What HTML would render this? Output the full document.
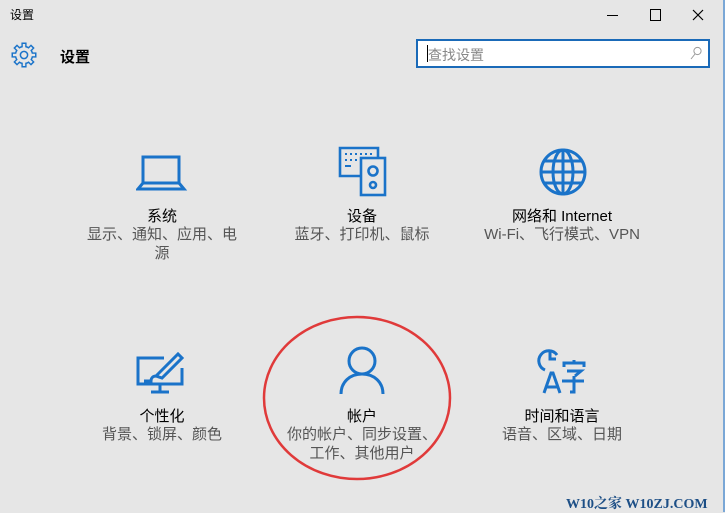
<html><head><style>
body{margin:0;width:725px;height:512px;background:#e6e6e6;font-family:"Liberation Sans","Noto Sans CJK SC",sans-serif;position:relative;overflow:hidden}
.a{position:absolute}
.t{position:absolute;width:200px;text-align:center;font-size:15px;color:#000}
.s{position:absolute;width:170px;text-align:center;font-size:15px;color:#555;line-height:19px}
</style></head><body>
<div class="a" style="left:10px;top:6px;font-size:12px">设置</div>
<div class="a" style="left:607px;top:15px;width:11px;height:1px;background:#000"></div>
<div class="a" style="left:650px;top:9px;width:9px;height:10px;border:1px solid #000"></div>
<svg class="a" style="left:692px;top:9px" width="12" height="12"><path d="M1 1l10 10M11 1L1 11" stroke="#000" stroke-width="1.2"/></svg>
<div class="a" style="left:723px;top:0;width:2px;height:512px;background:#7aa7d6"></div>
<svg class="a" style="left:10px;top:41px" width="28" height="28" viewBox="0 0 28 28">
<g fill="#1a73c9" transform="translate(14 14)">
<circle r="9.3"/>
<g id="tt"><rect x="-2.6" y="-12.5" width="5.2" height="5"/></g>
<use href="#tt" transform="rotate(45)"/><use href="#tt" transform="rotate(90)"/><use href="#tt" transform="rotate(135)"/><use href="#tt" transform="rotate(180)"/><use href="#tt" transform="rotate(225)"/><use href="#tt" transform="rotate(270)"/><use href="#tt" transform="rotate(315)"/>
</g>
<g fill="#e6e6e6" transform="translate(14 14)">
<circle r="7.8"/>
<g id="tb"><rect x="-1.2" y="-11" width="2.4" height="4"/></g>
<use href="#tb" transform="rotate(45)"/><use href="#tb" transform="rotate(90)"/><use href="#tb" transform="rotate(135)"/><use href="#tb" transform="rotate(180)"/><use href="#tb" transform="rotate(225)"/><use href="#tb" transform="rotate(270)"/><use href="#tb" transform="rotate(315)"/>
<circle r="3.6" fill="none" stroke="#1a73c9" stroke-width="1.5"/>
</g></svg>
<div class="a" style="left:60px;top:46px;font-size:15px;font-weight:bold">设置</div>
<div class="a" style="left:416px;top:39px;width:294px;height:29px;border:2px solid #1a6ab8;background:#fff;box-sizing:border-box"></div>
<div class="a" style="left:428px;top:45px;font-size:14px;color:#888">查找设置</div>
<div class="a" style="left:427px;top:45px;width:1px;height:17px;background:#000"></div>
<svg class="a" style="left:690px;top:46px" width="12" height="14"><circle cx="7.5" cy="5" r="3.6" fill="none" stroke="#999"/><path d="M5 8l-4 5" stroke="#999"/></svg>

<svg class="a" style="left:136px;top:155px" width="52" height="36"><path fill="none" stroke="#1a73c9" stroke-width="3" d="M7 2h36v26H7z M7 28L2 34h46l-5-6"/></svg>
<svg class="a" style="left:338px;top:145px" width="50" height="52" fill="none" stroke="#1a73c9" stroke-width="2.6"><path d="M2 3h38v28H2z"/><path d="M7 9h2M12 9h2M17 9h2M22 9h2M27 9h2M32 9h2M7 15h2M12 15h2M17 15h2M7 21h6" stroke-width="2"/><rect x="23" y="13" width="24" height="37" fill="#e6e6e6"/><circle cx="35" cy="26" r="4.5"/><circle cx="35" cy="40" r="3"/></svg>
<svg class="a" style="left:538px;top:147px" width="50" height="50" fill="none" stroke="#1a73c9" stroke-width="3"><circle cx="25" cy="25" r="22"/><ellipse cx="25" cy="25" rx="10" ry="22"/><path d="M25 3v44M3 25h44M7 14h36M7 36h36"/></svg>

<div class="t" style="left:62px;top:205px">系统</div><div class="s" style="left:77px;top:225px">显示、通知、应用、电<br>源</div>
<div class="t" style="left:262px;top:205px">设备</div><div class="s" style="left:277px;top:225px">蓝牙、打印机、鼠标</div>
<div class="t" style="left:462px;top:205px">网络和 Internet</div><div class="s" style="left:477px;top:225px">Wi-Fi、飞行模式、VPN</div>

<svg class="a" style="left:136px;top:352px" width="50" height="42" fill="none" stroke="#1a73c9" stroke-width="3"><path d="M28 6H2v26h44V16"/><path d="M24 32v7M15 40h18"/><path d="M20 24l22-22 4 4-20 20z M20 24c-3 0-5 2-5 5h-7" /></svg>
<svg class="a" style="left:339px;top:346px" width="46" height="48" fill="none" stroke="#1a73c9" stroke-width="3"><circle cx="23" cy="15" r="13"/><path d="M2 48c0-12 9-20 21-20s21 8 21 20"/></svg>
<svg class="a" style="left:536px;top:345px" width="54" height="52" fill="none" stroke="#1a73c9" stroke-width="3"><path d="M9 25A10 10 0 1 1 21 10"/><path d="M14 6v8h6"/><path d="M8 48L15 28h2l7 20M10 42h12"/><path d="M28 22v-4h20v4M38 15v3M31 26h14l-6 5M38 31v16h-4M26 36h22"/></svg>

<div class="t" style="left:62px;top:405px">个性化</div><div class="s" style="left:77px;top:425px">背景、锁屏、颜色</div>
<div class="t" style="left:262px;top:405px">帐户</div><div class="s" style="left:277px;top:425px">你的帐户、同步设置、<br>工作、其他用户</div>
<div class="t" style="left:462px;top:405px">时间和语言</div><div class="s" style="left:477px;top:425px">语音、区域、日期</div>

<svg class="a" style="left:260px;top:314px" width="196" height="170"><ellipse cx="97" cy="84" rx="93" ry="81" fill="none" stroke="#e03a3a" stroke-width="2.5"/></svg>
<div class="a" style="left:566px;top:493px;font-family:'Liberation Serif','Noto Serif CJK SC',serif;font-weight:bold;font-size:14px;color:#1d4f86">W10之家 W10ZJ.COM</div>
</body></html>
